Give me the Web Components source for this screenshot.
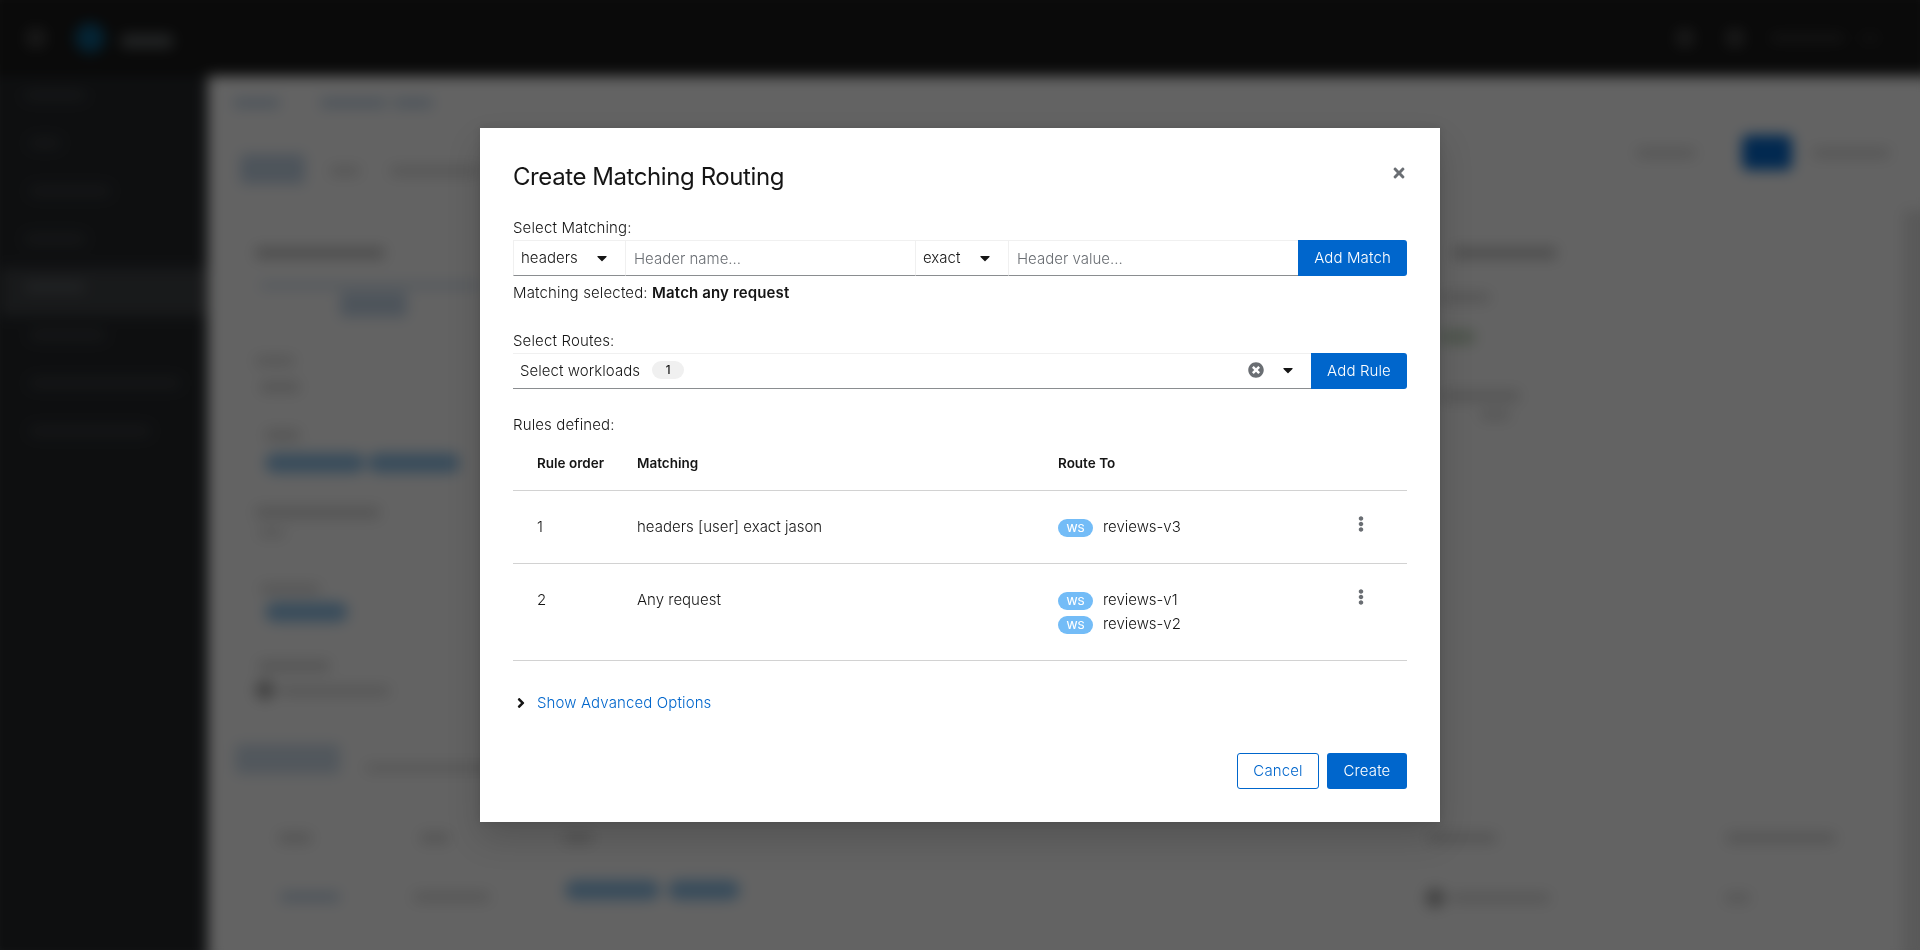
<!DOCTYPE html>
<html lang="en">
<head>
<meta charset="utf-8">
<title>Create Matching Routing</title>
<style>
html, body { margin: 0; height: 100%; overflow: hidden; background: #fff; }
body { font-family: Inter, "Noto Sans", sans-serif; font-size: 16px; color: #151515; }
</style>
</head>
<body>

<app-backdrop></app-backdrop>

<modal-overlay>
  <modal-box heading="Create Matching Routing">
    <field-label>Select Matching:</field-label>
    <input-row>
      <pf-select style="width:112px">headers</pf-select>
      <pf-input style="width:290px">Header name...</pf-input>
      <pf-select style="width:93px">exact</pf-select>
      <pf-input style="width:290px">Header value...</pf-input>
      <pf-button slot="action" style="width:109px">Add Match</pf-button>
    </input-row>
    <field-label style="margin-top:5px">Matching selected: <b style="font-weight:600">Match any request</b></field-label>

    <field-label style="margin-top:24px">Select Routes:</field-label>
    <input-row>
      <workload-select count="1">Select workloads</workload-select>
      <pf-button slot="action" style="width:96px">Add Rule</pf-button>
    </input-row>

    <field-label style="margin-top:24px">Rules defined:</field-label>
    <rule-table>
      <rule-row order="1" matching="headers [user] exact jason">
        <route-target>reviews-v3</route-target>
      </rule-row>
      <rule-row order="2" matching="Any request">
        <route-target>reviews-v1</route-target>
        <route-target>reviews-v2</route-target>
      </rule-row>
    </rule-table>

    <advanced-toggle>Show Advanced Options</advanced-toggle>

    <pf-button slot="footer" variant="secondary" style="width:82px">Cancel</pf-button>
    <pf-button slot="footer" style="width:80px;border-radius:3px">Create</pf-button>
  </modal-box>
</modal-overlay>

<script>
"use strict"

const ICONS = {
    caret: '<svg viewBox="0 0 320 512" width="10" height="16" fill="currentColor"><path d="M31.3 192h257.3c17.8 0 26.7 21.5 14.1 34.1L174.1 354.8c-7.8 7.8-20.5 7.8-28.3 0L17.2 226.1C4.6 213.5 13.5 192 31.3 192z"/></svg>',
    times: '<svg viewBox="0 0 352 512" width="12" height="16" fill="currentColor"><path d="M242.72 256l100.07-100.07c12.28-12.28 12.28-32.19 0-44.48l-22.24-22.24c-12.28-12.28-32.19-12.28-44.48 0L176 189.28 75.93 89.21c-12.28-12.28-32.19-12.28-44.48 0L9.21 111.45c-12.28 12.28-12.28 32.19 0 44.48L109.28 256 9.21 356.07c-12.28 12.28-12.28 32.19 0 44.48l22.24 22.24c12.28 12.28 32.2 12.28 44.48 0L176 322.72l100.07 100.07c12.28 12.28 32.2 12.28 44.48 0l22.24-22.24c12.28-12.28 12.28-32.19 0-44.48L242.72 256z"/></svg>',
    clear: '<svg viewBox="0 0 512 512" width="16" height="16" fill="currentColor"><path d="M256 8C119 8 8 119 8 256s111 248 248 248 248-111 248-248S393 8 256 8zm121.6 313.1c4.7 4.7 4.7 12.3 0 17L338 377.6c-4.7 4.7-12.3 4.7-17 0L256 312l-65.1 65.6c-4.7 4.7-12.3 4.7-17 0L134.4 338c-4.7-4.7-4.7-12.3 0-17l65.6-65-65.6-65.1c-4.7-4.7-4.7-12.3 0-17l39.6-39.6c4.7-4.7 12.3-4.7 17 0l65 65.7 65.1-65.6c4.7-4.7 12.3-4.7 17 0l39.6 39.6c4.7 4.7 4.7 12.3 0 17L312 256l65.6 65.1z"/></svg>',
    angle: '<svg viewBox="0 0 256 512" width="8" height="16" fill="currentColor"><path d="M224.3 273l-136 136c-9.4 9.4-24.6 9.4-33.9 0l-22.6-22.6c-9.4-9.4-9.4-24.6 0-33.9l96.4-96.4-96.4-96.4c-9.4-9.4-9.4-24.6 0-33.9L54.3 103c9.4-9.4 24.6-9.4 33.9 0l136 136c9.5 9.4 9.5 24.6.1 34z"/></svg>',
    kebab: '<svg viewBox="0 0 192 512" width="6" height="16" fill="currentColor"><path d="M96 184c39.8 0 72 32.2 72 72s-32.2 72-72 72-72-32.2-72-72 32.2-72 72-72zM24 80c0 39.8 32.2 72 72 72s72-32.2 72-72S135.8 8 96 8 24 40.2 24 80zm0 352c0 39.8 32.2 72 72 72s72-32.2 72-72-32.2-72-72-72-72 32.2-72 72z"/></svg>'
};

// small helper, every element here is just a style block plus some markup
function define(name, html, extra) {
    const tpl = document.createElement('template');
    tpl.innerHTML = html;
    customElements.define(name, class extends HTMLElement {
        constructor() {
            super();
            this.attachShadow({ mode: 'open' });
            this.shadowRoot.appendChild(tpl.content.cloneNode(true));
        }
        connectedCallback() {
            if (extra) extra(this, this.shadowRoot);
        }
    });
}

/* Blurred page behind the modal: nothing in it can be read, so it is only bars */
define('skel-bar', `
<style>
:host { display: block; flex: none; height: 10px; background: #dcdcdc; border-radius: 4px; }
</style>`);

define('app-backdrop', `
<style>
:host {
    position: fixed; inset: -12px;
    display: grid;
    grid-template-columns: 220px 1fr;
    grid-template-rows: 88px 1fr;
    filter: blur(7px);
    background: #fff;
}
.mast {
    grid-column: 1 / 3;
    background: #151515;
    display: flex; align-items: center;
    padding: 12px 0 0 37px;
}
.side { background: #212427; padding-left: 12px; }
.nav { height: 48px; padding: 14px 0 0 0; box-sizing: border-box; }
.nav.on { background: #3c3f42; }
.nav skel-bar { background: #36393c; }
.main { background: #fff; position: relative; overflow: hidden; }
.row { display: flex; align-items: flex-start; }
.grow { flex: 1; }
.blue { background: #c6d8ea; }
.pill { background: #8fc2ea; border-radius: 10px; }
.stripe { position: absolute; right: 0; top: 134px; bottom: 0; width: 29px; background: #e6e6e6; }
</style>
<div class="mast">
  <skel-bar style="width:22px;height:22px;border-radius:50%;background:#3c3c3c;margin-right:28px"></skel-bar>
  <skel-bar style="width:30px;height:30px;border-radius:50%;background:#085a84;margin-right:16px"></skel-bar>
  <skel-bar style="width:52px;height:14px;background:#565b5d;margin-top:6px"></skel-bar>
  <span class="grow"></span>
  <skel-bar style="width:20px;height:20px;border-radius:50%;background:#404040;margin-right:30px"></skel-bar>
  <skel-bar style="width:20px;height:20px;border-radius:50%;background:#404040;margin-right:25px"></skel-bar>
  <skel-bar style="width:75px;height:10px;background:#2e2e2e;margin-right:15px"></skel-bar>
  <skel-bar style="width:20px;height:10px;background:#262626;margin-right:52px"></skel-bar>
</div>
<div class="side">
  <div class="nav"><skel-bar style="width:60px;margin-left:25px"></skel-bar></div>
  <div class="nav"><skel-bar style="width:30px;margin-left:30px"></skel-bar></div>
  <div class="nav"><skel-bar style="width:80px;margin-left:30px"></skel-bar></div>
  <div class="nav"><skel-bar style="width:60px;margin-left:25px"></skel-bar></div>
  <div class="nav on"><skel-bar style="width:60px;margin-left:25px;background:#55595d"></skel-bar></div>
  <div class="nav"><skel-bar style="width:75px;margin-left:30px"></skel-bar></div>
  <div class="nav"><skel-bar style="width:150px;margin-left:30px"></skel-bar></div>
  <div class="nav"><skel-bar style="width:120px;margin-left:30px"></skel-bar></div>
</div>
<div class="main">
  <div class="stripe"></div>
  <div class="row" style="padding:22px 0 0 25px">
    <skel-bar class="blue" style="width:47px;margin-right:40px"></skel-bar>
    <skel-bar class="blue" style="width:67px;margin-right:6px"></skel-bar>
    <skel-bar class="blue" style="width:40px"></skel-bar>
  </div>
  <div class="row" style="padding:27px 42px 0 32px;height:60px;box-sizing:border-box">
    <skel-bar class="blue" style="width:65px;height:30px;margin-top:19px;margin-right:25px"></skel-bar>
    <skel-bar style="width:30px;margin-top:31px;margin-right:30px"></skel-bar>
    <skel-bar style="width:90px;margin-top:31px"></skel-bar>
    <span class="grow"></span>
    <skel-bar style="width:60px;margin-top:13px;margin-right:46px"></skel-bar>
    <skel-bar style="width:50px;height:35px;margin-right:20px;background:#06c;border-radius:6px"></skel-bar>
    <skel-bar style="width:78px;margin-top:13px"></skel-bar>
  </div>
  <div class="row" style="padding-top:79px">
    <div style="padding-left:47px;height:500px">
      <skel-bar style="width:130px;height:12px;background:#c8c8c8"></skel-bar>
      <skel-bar class="blue" style="width:220px;height:5px;margin:24px 0 0 5px"></skel-bar>
      <skel-bar class="blue" style="width:67px;height:25px;margin:4px 0 0 85px"></skel-bar>
      <skel-bar style="width:40px;margin-top:39px"></skel-bar>
      <skel-bar style="width:40px;height:12px;margin:15px 0 0 5px"></skel-bar>
      <skel-bar style="width:35px;height:12px;margin:36px 0 0 10px"></skel-bar>
      <div class="row" style="margin:12px 0 0 10px;gap:3px">
        <skel-bar class="pill" style="width:100px;height:20px"></skel-bar>
        <skel-bar class="pill" style="width:92px;height:20px"></skel-bar>
      </div>
      <skel-bar style="width:125px;height:13px;margin-top:33px"></skel-bar>
      <skel-bar style="width:27px;height:8px;margin:10px 0 0 3px"></skel-bar>
      <skel-bar style="width:60px;margin:47px 0 0 5px"></skel-bar>
      <skel-bar class="pill" style="width:83px;height:20px;margin:8px 0 0 10px"></skel-bar>
      <skel-bar style="width:72px;height:12px;margin:38px 0 0 3px"></skel-bar>
      <div class="row" style="margin-top:8px">
        <skel-bar style="width:20px;height:20px;border-radius:50%;background:#aaa"></skel-bar>
        <skel-bar style="width:110px;margin:6px 0 0 5px"></skel-bar>
      </div>
    </div>
    <span class="grow"></span>
    <div style="width:492px">
      <skel-bar style="width:105px;height:12px;margin-left:12px;background:#c8c8c8"></skel-bar>
      <skel-bar style="width:50px;height:11px;margin-top:33px"></skel-bar>
      <skel-bar style="width:35px;height:14px;margin-top:27px;background:#c6d8c2"></skel-bar>
      <skel-bar style="width:80px;height:12px;margin-top:46px"></skel-bar>
      <skel-bar style="width:30px;height:10px;margin:8px 0 0 40px"></skel-bar>
    </div>
  </div>
  <div class="row" style="padding:0 0 0 27px;margin-top:-3px">
    <skel-bar class="blue" style="width:105px;height:30px;margin-right:25px;opacity:.8"></skel-bar>
    <skel-bar style="width:400px;height:8px;margin-top:20px"></skel-bar>
  </div>
  <div class="row" style="padding:58px 0 0 70px">
    <skel-bar style="width:34px;height:12px;margin-right:108px"></skel-bar>
    <skel-bar style="width:30px;height:12px;margin-right:113px"></skel-bar>
    <skel-bar style="width:30px;height:12px;margin-right:835px"></skel-bar>
    <skel-bar style="width:69px;height:12px;margin-right:229px"></skel-bar>
    <skel-bar style="width:110px;height:12px"></skel-bar>
  </div>
  <div class="row" style="padding:41px 0 0 72px">
    <skel-bar class="blue" style="width:60px;margin:7px 73px 0 0"></skel-bar>
    <skel-bar style="width:77px;margin:7px 75px 0 0"></skel-bar>
    <skel-bar class="pill" style="width:95px;height:20px;margin:-5px 8px 0 0"></skel-bar>
    <skel-bar class="pill" style="width:72px;height:20px;margin:-5px 685px 0 0"></skel-bar>
    <skel-bar style="width:20px;height:20px;border-radius:50%;background:#aaa;margin:3px 5px 0 0"></skel-bar>
    <skel-bar style="width:100px;margin:8px 175px 0 0"></skel-bar>
    <skel-bar style="width:25px;margin-top:8px"></skel-bar>
  </div>
</div>`);

/* Modal */
define('modal-overlay', `
<style>
:host {
    position: fixed; inset: 0;
    background: rgba(3,3,3,.62);
    display: flex; justify-content: center; align-items: flex-start;
    padding-top: 128px;
    box-sizing: border-box;
}
</style>
<slot></slot>`);

define('modal-box', `
<style>
:host {
    display: block; box-sizing: border-box;
    width: 960px;
    padding: 32px 33px 33px;
    background: #fff;
    box-shadow: 0 16px 32px rgba(3,3,3,.16), 0 0 8px rgba(3,3,3,.1);
}
header { display: flex; justify-content: space-between; margin-bottom: 24px; }
h1 { margin: 0; font-size: 24px; line-height: 32px; font-weight: 400; letter-spacing: -.42px; color: #151515; position: relative; top: 1px; }
.close { color: #6a6e73; height: 16px; margin: 5px 2px 0 0; }
footer { display: flex; justify-content: flex-end; gap: 8px; margin-top: 38px; }
</style>
<header><h1></h1><span class="close">${ICONS.times}</span></header>
<slot></slot>
<footer><slot name="footer"></slot></footer>`,
(el, root) => { root.querySelector('h1').textContent = el.getAttribute('heading'); });

define('field-label', `
<style>
:host { display: block; font-size: 15px; line-height: 24px; letter-spacing: .14px; color: #151515; font-weight: 300; }
</style>
<slot></slot>`);

define('input-row', `
<style>
:host { display: flex; height: 36px; }
.cells { flex: 1; display: flex; min-width: 0; }
</style>
<div class="cells"><slot></slot></div><slot name="action"></slot>`);

define('pf-select', `
<style>
:host {
    display: flex; align-items: center; justify-content: space-between; flex: none; box-sizing: border-box;
    padding: 0 18px 2px 7px;
    border: 1px solid #f0f0f0; border-bottom-color: #8a8d90; border-right: 0;
    font-size: 15px; font-weight: 300;
}
span { display: flex; position: relative; top: 1px; }
</style>
<slot></slot><span>${ICONS.caret}</span>`);

define('pf-input', `
<style>
:host {
    display: flex; align-items: center; flex: none; box-sizing: border-box;
    padding: 0 8px;
    border: 1px solid #f0f0f0; border-bottom-color: #8a8d90; border-right: 0;
    font-size: 15px; font-weight: 300; color: #6a6e73;
}
</style>
<slot></slot>`);

define('workload-select', `
<style>
:host {
    flex: 1; display: flex; align-items: center; box-sizing: border-box;
    padding: 0 18px 2px 7px;
    border-top: 1px solid #f0f0f0; border-bottom: 1px solid #8a8d90;
    font-size: 15px; font-weight: 300; letter-spacing: .05px;
}
.count {
    margin-left: 12px; width: 32px; height: 18px; border-radius: 9px;
    background: #f0f0f0; font-size: 11.5px; font-weight: 500; line-height: 18px; text-align: center;
}
.clear { margin-left: auto; color: #6a6e73; display: flex; }
.caret { margin-left: 19px; display: flex; }
</style>
<slot></slot><span class="count"></span>
<span class="clear">${ICONS.clear}</span><span class="caret">${ICONS.caret}</span>`,
(el, root) => { root.querySelector('.count').textContent = el.getAttribute('count'); });

define('pf-button', `
<style>
:host {
    display: flex; align-items: center; justify-content: center; flex: none; box-sizing: border-box;
    height: 36px; padding-bottom: 2px; background: #06c; color: #fff;
    border-radius: 0 3px 3px 0;
    font-size: 15px; font-weight: 300; letter-spacing: .12px;
}
:host([variant=secondary]) {
    background: #fff; color: #06c; border: 1px solid #06c; border-radius: 3px;
}
</style>
<slot></slot>`);

define('rule-table', `
<style>
:host { display: block; }
.head {
    display: grid; grid-template-columns: 124px 421px 1fr;
    height: 54px; box-sizing: border-box;
    padding-top: 14px;
    border-bottom: 1px solid #d2d2d2;
    font-size: 13.5px; line-height: 24px; font-weight: 600;
}
.head span:first-child { padding-left: 24px; }
</style>
<div class="head"><span>Rule order</span><span>Matching</span><span>Route To</span></div>
<slot></slot>`);

define('rule-row', `
<style>
:host {
    display: grid; grid-template-columns: 124px 421px 1fr 60px;
    padding: 24px 16px 24px 0;
    border-bottom: 1px solid #d2d2d2;
    font-size: 15px; line-height: 24px; font-weight: 300;
}
.order { padding-left: 24px; }
.kebab { color: #6a6e73; height: 16px; margin-top: 1px; display: flex; justify-content: center; }
</style>
<span class="order"></span><span class="matching"></span>
<div><slot></slot></div>
<span class="kebab">${ICONS.kebab}</span>`,
(el, root) => {
    root.querySelector('.order').textContent = el.getAttribute('order');
    root.querySelector('.matching').textContent = el.getAttribute('matching');
});

define('route-target', `
<style>
:host { display: flex; align-items: center; height: 24px; letter-spacing: -.03px; }
.ws {
    width: 35px; height: 18px; border-radius: 9px; margin: 2px 10px 0 0;
    background: #73bcf7; color: #fff;
    font-size: 11px; font-weight: 500; line-height: 18px; text-align: center;
}
</style>
<span class="ws">WS</span><slot></slot>`);

define('advanced-toggle', `
<style>
:host { display: flex; align-items: center; margin-top: 30px; line-height: 24px; font-size: 15px; font-weight: 300; letter-spacing: .12px; color: #06c; }
span { width: 24px; color: #151515; display: flex; padding-left: 4px; box-sizing: border-box; }
</style>
<span>${ICONS.angle}</span><slot></slot>`);
</script>
</body>
</html>
